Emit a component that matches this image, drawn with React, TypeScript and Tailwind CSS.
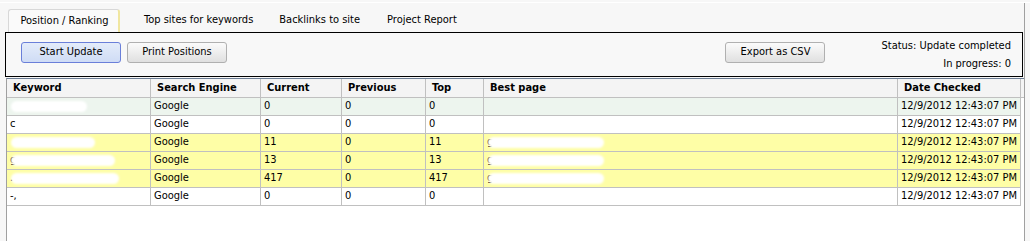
import React from "react";

const cols = [
  { name: "Keyword", w: 144 },
  { name: "Search Engine", w: 110 },
  { name: "Current", w: 81 },
  { name: "Previous", w: 84 },
  { name: "Top", w: 58 },
  { name: "Best page", w: 414 },
  { name: "Date Checked", w: 123 },
];

type Row = {
  bg: string;
  kw: string;
  kwBlob: number;
  cur: string;
  top: string;
  best: string;
  bestBlob: number;
};

const rows: Row[] = [
  { bg: "bg-[#edf5ee]", kw: "", kwBlob: 76, cur: "0", top: "0", best: "", bestBlob: 0 },
  { bg: "bg-white", kw: "c", kwBlob: 0, cur: "0", top: "0", best: "", bestBlob: 0 },
  { bg: "bg-[#fefea6]", kw: "", kwBlob: 84, cur: "11", top: "11", best: "g", bestBlob: 116 },
  { bg: "bg-[#fefea6]", kw: "g", kwBlob: 104, cur: "13", top: "13", best: "g", bestBlob: 116 },
  { bg: "bg-[#fefea6]", kw: ".", kwBlob: 108, cur: "417", top: "417", best: "g", bestBlob: 116 },
  { bg: "bg-white", kw: "-,", kwBlob: 0, cur: "0", top: "0", best: "", bestBlob: 0 },
];

const font = { fontFamily: 'Tahoma, "DejaVu Sans Condensed", "Liberation Sans", sans-serif' };

function Blob({ w }: { w: number }) {
  if (!w) return null;
  return (
    <div
      className="absolute left-[4px] top-[3px] h-[11px] rounded-full bg-white blur-[1px]"
      style={{ width: w }}
    />
  );
}

export default function App() {
  return (
    <div
      className="w-[1030px] h-[241px] overflow-hidden bg-[#f7f7f7] text-[11px] text-black flex flex-col"
      style={font}
    >
      <div className="mt-[2px] h-px bg-white" />
      <div className="flex flex-1 min-h-0 border-r border-[#a0a0a0] mr-[5px] pt-[5px] flex-col">
        {/* tabs */}
        <div className="flex h-[24px] pl-[8px] items-end">
          <div className="h-[23px] w-[112px] flex items-center justify-center bg-[#fafafa] border border-b-0 border-[#d8d8d8] border-r-[2px] border-r-[#f0e6a0] rounded-t-[3px] pl-[2px]">
            Position / Ranking
          </div>
          <div className="h-[23px] flex items-center pl-[24px]">Top sites for keywords</div>
          <div className="h-[23px] flex items-center pl-[26px]">Backlinks to site</div>
          <div className="h-[23px] flex items-center pl-[27px]">Project Report</div>
        </div>
        {/* toolbar */}
        <div className="ml-[5px] mr-[1px] h-[45px] border border-black bg-[#f8f8f8] flex items-start pt-[9px] pl-[15px] pr-[11px]">
          <button className="w-[100px] h-[21px] rounded-[3px] border border-[#6a7fd9] bg-gradient-to-b from-[#e4ecfa] to-[#cfdcf5]">
            Start Update
          </button>
          <button className="ml-[6px] w-[100px] h-[21px] rounded-[3px] border border-[#b0b0b0] bg-gradient-to-b from-[#fbfbfb] to-[#e0e0e0]">
            Print Positions
          </button>
          <div className="flex-1" />
          <button className="w-[100px] h-[21px] rounded-[3px] border border-[#b0b0b0] bg-gradient-to-b from-[#fbfbfb] to-[#e0e0e0]">
            Export as CSV
          </button>
          <div className="ml-[56px] flex flex-col items-end leading-[18px] -mt-[5px]">
            <div>Status: Update completed</div>
            <div>In progress: 0</div>
          </div>
        </div>
        {/* table */}
        <div className="ml-[6px] mt-[1px] flex-1 bg-white border-l border-t border-[#a0a0a0] border-t-[#6b7c93]">
          <div className="flex h-[19px] bg-[#f4f4f4] border-b border-[#c0c0c0] font-bold">
            {cols.map((c) => (
              <div
                key={c.name}
                className="flex items-center pl-[6px] pt-px h-full border-r border-[#c0c0c0]"
                style={{ width: c.w }}
              >
                {c.name}
              </div>
            ))}
          </div>
          {rows.map((r, ri) => {
            const cells = [r.kw, "Google", r.cur, "0", r.top, r.best, "12/9/2012 12:43:07 PM"];
            return (
              <div key={ri} className={`flex h-[18px] border-b border-[#c0c0c0] w-[1014px] ${r.bg}`}>
                {cells.map((v, i) => (
                  <div
                    key={i}
                    className="relative flex items-center pl-[3px] h-full border-r border-[#c0c0c0]"
                    style={{ width: cols[i].w }}
                  >
                    {v}
                    {i === 0 && <Blob w={r.kwBlob} />}
                    {i === 5 && <Blob w={r.bestBlob} />}
                  </div>
                ))}
              </div>
            );
          })}
        </div>
      </div>
    </div>
  );
}
